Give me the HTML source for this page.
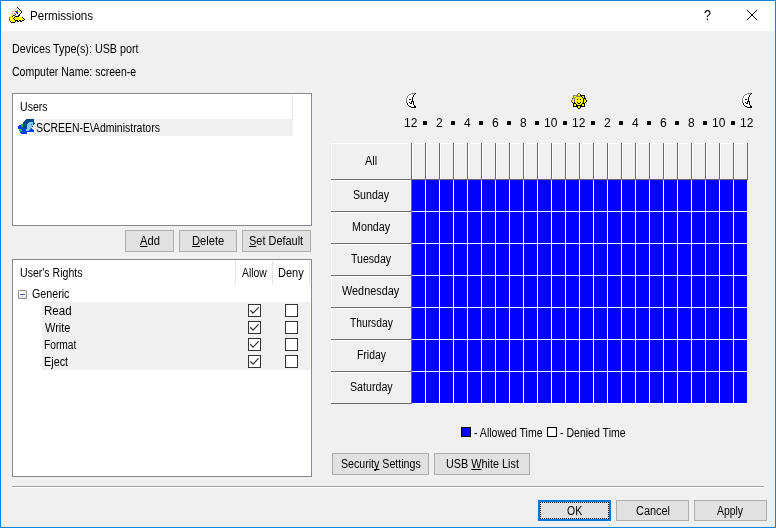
<!DOCTYPE html>
<html><head><meta charset="utf-8"><style>
*{margin:0;padding:0;box-sizing:border-box}
html,body{width:776px;height:528px;overflow:hidden;background:#f0f0f0;font-family:"Liberation Sans",sans-serif;font-size:12px;color:#000}
.a{position:absolute}
.t{position:absolute;white-space:nowrap;line-height:14px;transform-origin:0 0}
u{text-decoration:underline;text-decoration-skip-ink:none}
</style></head><body>
<div class="a" style="left:0px;top:0px;width:776px;height:528px;border:1px solid #1883d7;background:#f0f0f0"></div>
<div class="a" style="left:1px;top:1px;width:774px;height:30px;background:#fff"></div>
<svg class="a" style="left:8px;top:6px" width="17" height="17" viewBox="0 0 17 17" shape-rendering="crispEdges"><rect x="9" y="1" width="1" height="1" fill="#000"/><rect x="8" y="2" width="1" height="1" fill="#c0c0c0"/><rect x="9" y="2" width="1" height="1" fill="#fff"/><rect x="10" y="2" width="1" height="1" fill="#000"/><rect x="7" y="3" width="1" height="1" fill="#c0c0c0"/><rect x="8" y="3" width="3" height="1" fill="#fff"/><rect x="11" y="3" width="1" height="1" fill="#000"/><rect x="6" y="4" width="1" height="1" fill="#c0c0c0"/><rect x="7" y="4" width="2" height="1" fill="#fff"/><rect x="9" y="4" width="1" height="1" fill="#00c000"/><rect x="10" y="4" width="2" height="1" fill="#fff"/><rect x="12" y="4" width="1" height="1" fill="#000"/><rect x="4" y="5" width="2" height="1" fill="#c0c0c0"/><rect x="6" y="5" width="1" height="1" fill="#fff"/><rect x="7" y="5" width="2" height="1" fill="#ff0000"/><rect x="9" y="5" width="1" height="1" fill="#00c000"/><rect x="10" y="5" width="2" height="1" fill="#ffff00"/><rect x="12" y="5" width="1" height="1" fill="#fff"/><rect x="13" y="5" width="1" height="1" fill="#000"/><rect x="4" y="6" width="1" height="1" fill="#c0c0c0"/><rect x="5" y="6" width="3" height="1" fill="#fff"/><rect x="8" y="6" width="2" height="1" fill="#0000ff"/><rect x="10" y="6" width="3" height="1" fill="#fff"/><rect x="13" y="6" width="1" height="1" fill="#000"/><rect x="4" y="7" width="1" height="1" fill="#c0c0c0"/><rect x="5" y="7" width="1" height="1" fill="#fff"/><rect x="6" y="7" width="1" height="1" fill="#ff0000"/><rect x="7" y="7" width="2" height="1" fill="#fff"/><rect x="9" y="7" width="1" height="1" fill="#000"/><rect x="10" y="7" width="2" height="1" fill="#fff"/><rect x="12" y="7" width="1" height="1" fill="#000"/><rect x="4" y="8" width="1" height="1" fill="#c0c0c0"/><rect x="5" y="8" width="2" height="1" fill="#fff"/><rect x="7" y="8" width="1" height="1" fill="#0000ff"/><rect x="8" y="8" width="3" height="1" fill="#fff"/><rect x="11" y="8" width="1" height="1" fill="#000"/><rect x="3" y="9" width="2" height="1" fill="#ffff00"/><rect x="5" y="9" width="2" height="1" fill="#000"/><rect x="7" y="9" width="3" height="1" fill="#fff"/><rect x="10" y="9" width="2" height="1" fill="#000"/><rect x="2" y="10" width="2" height="1" fill="#ffff00"/><rect x="4" y="10" width="1" height="1" fill="#000"/><rect x="5" y="10" width="1" height="1" fill="#fff"/><rect x="6" y="10" width="1" height="1" fill="#ffff00"/><rect x="7" y="10" width="4" height="1" fill="#000"/><rect x="1" y="11" width="1" height="1" fill="#808000"/><rect x="2" y="11" width="3" height="1" fill="#ffff00"/><rect x="5" y="11" width="1" height="1" fill="#fff"/><rect x="6" y="11" width="1" height="1" fill="#000"/><rect x="7" y="11" width="7" height="1" fill="#ffff00"/><rect x="14" y="11" width="1" height="1" fill="#000"/><rect x="1" y="12" width="1" height="1" fill="#808000"/><rect x="2" y="12" width="3" height="1" fill="#ffff00"/><rect x="5" y="12" width="1" height="1" fill="#000"/><rect x="6" y="12" width="9" height="1" fill="#ffff00"/><rect x="15" y="12" width="1" height="1" fill="#000"/><rect x="1" y="13" width="1" height="1" fill="#808000"/><rect x="2" y="13" width="4" height="1" fill="#ffff00"/><rect x="6" y="13" width="1" height="1" fill="#000"/><rect x="7" y="13" width="9" height="1" fill="#ffff00"/><rect x="16" y="13" width="1" height="1" fill="#000"/><rect x="1" y="14" width="1" height="1" fill="#808000"/><rect x="2" y="14" width="5" height="1" fill="#ffff00"/><rect x="7" y="14" width="3" height="1" fill="#000"/><rect x="10" y="14" width="1" height="1" fill="#fff"/><rect x="11" y="14" width="2" height="1" fill="#000"/><rect x="13" y="14" width="1" height="1" fill="#fff"/><rect x="14" y="14" width="2" height="1" fill="#000"/><rect x="2" y="15" width="1" height="1" fill="#000"/><rect x="3" y="15" width="4" height="1" fill="#ffff00"/><rect x="7" y="15" width="1" height="1" fill="#000"/><rect x="9" y="15" width="2" height="1" fill="#000"/><rect x="12" y="15" width="2" height="1" fill="#000"/><rect x="3" y="16" width="4" height="1" fill="#000"/></svg>
<svg class="a" style="left:746px;top:9px" width="12" height="12" viewBox="0 0 12 12"><path d="M1 1L11 11M11 1L1 11" stroke="#000" stroke-width="1"/></svg>
<div class="a" style="left:12px;top:93px;width:300px;height:133px;border:1px solid #828790;background:#fff"></div>
<div class="a" style="left:292px;top:95px;width:1px;height:24px;background:#e5e5e5"></div>
<div class="a" style="left:34px;top:119px;width:259px;height:17px;background:#f0f0f0"></div>
<svg class="a" style="left:16px;top:116px" width="20" height="18" viewBox="0 0 20 18" shape-rendering="crispEdges"><rect x="10" y="3" width="8" height="1" fill="#004a8c"/><rect x="9" y="4" width="9" height="1" fill="#004a8c"/><rect x="8" y="5" width="10" height="1" fill="#004a8c"/><rect x="7" y="6" width="6" height="1" fill="#004a8c"/><rect x="13" y="6" width="4" height="1" fill="#8cc6f4"/><rect x="17" y="6" width="1" height="1" fill="#004a8c"/><rect x="7" y="7" width="5" height="1" fill="#004a8c"/><rect x="12" y="7" width="5" height="1" fill="#8cc6f4"/><rect x="17" y="7" width="2" height="1" fill="#004a8c"/><rect x="5" y="8" width="2" height="1" fill="#10c060"/><rect x="7" y="8" width="4" height="1" fill="#004a8c"/><rect x="11" y="8" width="4" height="1" fill="#8cc6f4"/><rect x="15" y="8" width="1" height="1" fill="#1060ff"/><rect x="16" y="8" width="1" height="1" fill="#8cc6f4"/><rect x="17" y="8" width="1" height="1" fill="#004a8c"/><rect x="3" y="9" width="2" height="1" fill="#0a3cf0"/><rect x="5" y="9" width="2" height="1" fill="#10c060"/><rect x="7" y="9" width="4" height="1" fill="#004a8c"/><rect x="11" y="9" width="6" height="1" fill="#8cc6f4"/><rect x="2" y="10" width="4" height="1" fill="#0a3cf0"/><rect x="6" y="10" width="1" height="1" fill="#10c060"/><rect x="7" y="10" width="4" height="1" fill="#004a8c"/><rect x="11" y="10" width="5" height="1" fill="#8cc6f4"/><rect x="16" y="10" width="1" height="1" fill="#004a8c"/><rect x="2" y="11" width="6" height="1" fill="#0a3cf0"/><rect x="8" y="11" width="3" height="1" fill="#004a8c"/><rect x="11" y="11" width="5" height="1" fill="#8cc6f4"/><rect x="2" y="12" width="7" height="1" fill="#0a3cf0"/><rect x="9" y="12" width="2" height="1" fill="#004a8c"/><rect x="11" y="12" width="4" height="1" fill="#8cc6f4"/><rect x="15" y="12" width="1" height="1" fill="#004a8c"/><rect x="3" y="13" width="3" height="1" fill="#10c060"/><rect x="6" y="13" width="4" height="1" fill="#0a3cf0"/><rect x="10" y="13" width="4" height="1" fill="#8cc6f4"/><rect x="14" y="13" width="3" height="1" fill="#0a3cf0"/><rect x="3" y="14" width="3" height="1" fill="#10c060"/><rect x="6" y="14" width="4" height="1" fill="#0a3cf0"/><rect x="10" y="14" width="3" height="1" fill="#8cc6f4"/><rect x="13" y="14" width="5" height="1" fill="#0a3cf0"/><rect x="4" y="15" width="1" height="1" fill="#10c060"/><rect x="5" y="15" width="13" height="1" fill="#0a3cf0"/><rect x="4" y="16" width="7" height="1" fill="#0a3cf0"/><rect x="5" y="17" width="6" height="1" fill="#0a3cf0"/></svg>
<div class="a" style="left:125px;top:230px;width:49px;height:22px;border:1px solid #adadad;background:#e1e1e1;"></div>
<div class="a" style="left:179px;top:230px;width:58px;height:22px;border:1px solid #adadad;background:#e1e1e1;"></div>
<div class="a" style="left:242px;top:230px;width:69px;height:22px;border:1px solid #adadad;background:#e1e1e1;"></div>
<div class="a" style="left:12px;top:259px;width:300px;height:218px;border:1px solid #828790;background:#fff"></div>
<div class="a" style="left:235px;top:261px;width:1px;height:24px;background:#e5e5e5"></div>
<div class="a" style="left:272px;top:261px;width:1px;height:24px;background:#e5e5e5"></div>
<div class="a" style="left:309px;top:261px;width:1px;height:24px;background:#e5e5e5"></div>
<svg class="a" style="left:18px;top:290px" width="9" height="9" viewBox="0 0 9 9" shape-rendering="crispEdges"><rect x="0" y="0" width="9" height="9" fill="#8e8e8e"/><rect x="0" y="0" width="1" height="1" fill="#c8c8c8"/><rect x="8" y="0" width="1" height="1" fill="#c8c8c8"/><rect x="0" y="8" width="1" height="1" fill="#c8c8c8"/><rect x="8" y="8" width="1" height="1" fill="#c8c8c8"/><rect x="1" y="1" width="7" height="4" fill="#fdfdfd"/><rect x="1" y="5" width="7" height="1" fill="#f4f4f4"/><rect x="1" y="6" width="7" height="2" fill="#e6e6e6"/><rect x="2" y="4" width="5" height="1" fill="#3c56b0"/></svg>
<div class="a" style="left:42px;top:302px;width:268px;height:68px;background:#f0f0f0"></div>
<svg class="a" style="left:248px;top:304px" width="13" height="13" viewBox="0 0 13 13" shape-rendering="crispEdges"><rect x="0.5" y="0.5" width="12" height="12" fill="#fff" stroke="#333"/><path d="M2.3 6.3L5 9.1L10.6 3.4" fill="none" stroke="#333" stroke-width="1.25" shape-rendering="geometricPrecision"/></svg>
<svg class="a" style="left:285px;top:304px" width="13" height="13" viewBox="0 0 13 13" shape-rendering="crispEdges"><rect x="0.5" y="0.5" width="12" height="12" fill="#fff" stroke="#333"/></svg>
<svg class="a" style="left:248px;top:321px" width="13" height="13" viewBox="0 0 13 13" shape-rendering="crispEdges"><rect x="0.5" y="0.5" width="12" height="12" fill="#fff" stroke="#333"/><path d="M2.3 6.3L5 9.1L10.6 3.4" fill="none" stroke="#333" stroke-width="1.25" shape-rendering="geometricPrecision"/></svg>
<svg class="a" style="left:285px;top:321px" width="13" height="13" viewBox="0 0 13 13" shape-rendering="crispEdges"><rect x="0.5" y="0.5" width="12" height="12" fill="#fff" stroke="#333"/></svg>
<svg class="a" style="left:248px;top:338px" width="13" height="13" viewBox="0 0 13 13" shape-rendering="crispEdges"><rect x="0.5" y="0.5" width="12" height="12" fill="#fff" stroke="#333"/><path d="M2.3 6.3L5 9.1L10.6 3.4" fill="none" stroke="#333" stroke-width="1.25" shape-rendering="geometricPrecision"/></svg>
<svg class="a" style="left:285px;top:338px" width="13" height="13" viewBox="0 0 13 13" shape-rendering="crispEdges"><rect x="0.5" y="0.5" width="12" height="12" fill="#fff" stroke="#333"/></svg>
<svg class="a" style="left:248px;top:355px" width="13" height="13" viewBox="0 0 13 13" shape-rendering="crispEdges"><rect x="0.5" y="0.5" width="12" height="12" fill="#fff" stroke="#333"/><path d="M2.3 6.3L5 9.1L10.6 3.4" fill="none" stroke="#333" stroke-width="1.25" shape-rendering="geometricPrecision"/></svg>
<svg class="a" style="left:285px;top:355px" width="13" height="13" viewBox="0 0 13 13" shape-rendering="crispEdges"><rect x="0.5" y="0.5" width="12" height="12" fill="#fff" stroke="#333"/></svg>
<div class="a" style="left:331px;top:143px;width:81px;height:37px;box-shadow:inset -1px -1px #696969,inset 1px 1px #fff"></div>
<div class="a" style="left:331px;top:180px;width:81px;height:32px;box-shadow:inset -1px -1px #696969,inset 1px 1px #fff"></div>
<div class="a" style="left:331px;top:212px;width:81px;height:32px;box-shadow:inset -1px -1px #696969,inset 1px 1px #fff"></div>
<div class="a" style="left:331px;top:244px;width:81px;height:32px;box-shadow:inset -1px -1px #696969,inset 1px 1px #fff"></div>
<div class="a" style="left:331px;top:276px;width:81px;height:32px;box-shadow:inset -1px -1px #696969,inset 1px 1px #fff"></div>
<div class="a" style="left:331px;top:308px;width:81px;height:32px;box-shadow:inset -1px -1px #696969,inset 1px 1px #fff"></div>
<div class="a" style="left:331px;top:340px;width:81px;height:32px;box-shadow:inset -1px -1px #696969,inset 1px 1px #fff"></div>
<div class="a" style="left:331px;top:372px;width:81px;height:32px;box-shadow:inset -1px -1px #696969,inset 1px 1px #fff"></div>
<div class="a" style="left:412px;top:143px;width:14px;height:37px;box-shadow:inset -1px -1px #696969,inset 1px 1px #fff"></div>
<div class="a" style="left:426px;top:143px;width:14px;height:37px;box-shadow:inset -1px -1px #696969,inset 1px 1px #fff"></div>
<div class="a" style="left:440px;top:143px;width:14px;height:37px;box-shadow:inset -1px -1px #696969,inset 1px 1px #fff"></div>
<div class="a" style="left:454px;top:143px;width:14px;height:37px;box-shadow:inset -1px -1px #696969,inset 1px 1px #fff"></div>
<div class="a" style="left:468px;top:143px;width:14px;height:37px;box-shadow:inset -1px -1px #696969,inset 1px 1px #fff"></div>
<div class="a" style="left:482px;top:143px;width:14px;height:37px;box-shadow:inset -1px -1px #696969,inset 1px 1px #fff"></div>
<div class="a" style="left:496px;top:143px;width:14px;height:37px;box-shadow:inset -1px -1px #696969,inset 1px 1px #fff"></div>
<div class="a" style="left:510px;top:143px;width:14px;height:37px;box-shadow:inset -1px -1px #696969,inset 1px 1px #fff"></div>
<div class="a" style="left:524px;top:143px;width:14px;height:37px;box-shadow:inset -1px -1px #696969,inset 1px 1px #fff"></div>
<div class="a" style="left:538px;top:143px;width:14px;height:37px;box-shadow:inset -1px -1px #696969,inset 1px 1px #fff"></div>
<div class="a" style="left:552px;top:143px;width:14px;height:37px;box-shadow:inset -1px -1px #696969,inset 1px 1px #fff"></div>
<div class="a" style="left:566px;top:143px;width:14px;height:37px;box-shadow:inset -1px -1px #696969,inset 1px 1px #fff"></div>
<div class="a" style="left:580px;top:143px;width:14px;height:37px;box-shadow:inset -1px -1px #696969,inset 1px 1px #fff"></div>
<div class="a" style="left:594px;top:143px;width:14px;height:37px;box-shadow:inset -1px -1px #696969,inset 1px 1px #fff"></div>
<div class="a" style="left:608px;top:143px;width:14px;height:37px;box-shadow:inset -1px -1px #696969,inset 1px 1px #fff"></div>
<div class="a" style="left:622px;top:143px;width:14px;height:37px;box-shadow:inset -1px -1px #696969,inset 1px 1px #fff"></div>
<div class="a" style="left:636px;top:143px;width:14px;height:37px;box-shadow:inset -1px -1px #696969,inset 1px 1px #fff"></div>
<div class="a" style="left:650px;top:143px;width:14px;height:37px;box-shadow:inset -1px -1px #696969,inset 1px 1px #fff"></div>
<div class="a" style="left:664px;top:143px;width:14px;height:37px;box-shadow:inset -1px -1px #696969,inset 1px 1px #fff"></div>
<div class="a" style="left:678px;top:143px;width:14px;height:37px;box-shadow:inset -1px -1px #696969,inset 1px 1px #fff"></div>
<div class="a" style="left:692px;top:143px;width:14px;height:37px;box-shadow:inset -1px -1px #696969,inset 1px 1px #fff"></div>
<div class="a" style="left:706px;top:143px;width:14px;height:37px;box-shadow:inset -1px -1px #696969,inset 1px 1px #fff"></div>
<div class="a" style="left:720px;top:143px;width:14px;height:37px;box-shadow:inset -1px -1px #696969,inset 1px 1px #fff"></div>
<div class="a" style="left:734px;top:143px;width:14px;height:37px;box-shadow:inset -1px -1px #696969,inset 1px 1px #fff"></div>
<div class="a" style="left:412px;top:180px;width:335px;height:224px;background:#fff"></div>
<div class="a" style="left:412px;top:180px;width:13px;height:31px;background:#00f"></div>
<div class="a" style="left:426px;top:180px;width:13px;height:31px;background:#00f"></div>
<div class="a" style="left:440px;top:180px;width:13px;height:31px;background:#00f"></div>
<div class="a" style="left:454px;top:180px;width:13px;height:31px;background:#00f"></div>
<div class="a" style="left:468px;top:180px;width:13px;height:31px;background:#00f"></div>
<div class="a" style="left:482px;top:180px;width:13px;height:31px;background:#00f"></div>
<div class="a" style="left:496px;top:180px;width:13px;height:31px;background:#00f"></div>
<div class="a" style="left:510px;top:180px;width:13px;height:31px;background:#00f"></div>
<div class="a" style="left:524px;top:180px;width:13px;height:31px;background:#00f"></div>
<div class="a" style="left:538px;top:180px;width:13px;height:31px;background:#00f"></div>
<div class="a" style="left:552px;top:180px;width:13px;height:31px;background:#00f"></div>
<div class="a" style="left:566px;top:180px;width:13px;height:31px;background:#00f"></div>
<div class="a" style="left:580px;top:180px;width:13px;height:31px;background:#00f"></div>
<div class="a" style="left:594px;top:180px;width:13px;height:31px;background:#00f"></div>
<div class="a" style="left:608px;top:180px;width:13px;height:31px;background:#00f"></div>
<div class="a" style="left:622px;top:180px;width:13px;height:31px;background:#00f"></div>
<div class="a" style="left:636px;top:180px;width:13px;height:31px;background:#00f"></div>
<div class="a" style="left:650px;top:180px;width:13px;height:31px;background:#00f"></div>
<div class="a" style="left:664px;top:180px;width:13px;height:31px;background:#00f"></div>
<div class="a" style="left:678px;top:180px;width:13px;height:31px;background:#00f"></div>
<div class="a" style="left:692px;top:180px;width:13px;height:31px;background:#00f"></div>
<div class="a" style="left:706px;top:180px;width:13px;height:31px;background:#00f"></div>
<div class="a" style="left:720px;top:180px;width:13px;height:31px;background:#00f"></div>
<div class="a" style="left:734px;top:180px;width:13px;height:31px;background:#00f"></div>
<div class="a" style="left:412px;top:212px;width:13px;height:31px;background:#00f"></div>
<div class="a" style="left:426px;top:212px;width:13px;height:31px;background:#00f"></div>
<div class="a" style="left:440px;top:212px;width:13px;height:31px;background:#00f"></div>
<div class="a" style="left:454px;top:212px;width:13px;height:31px;background:#00f"></div>
<div class="a" style="left:468px;top:212px;width:13px;height:31px;background:#00f"></div>
<div class="a" style="left:482px;top:212px;width:13px;height:31px;background:#00f"></div>
<div class="a" style="left:496px;top:212px;width:13px;height:31px;background:#00f"></div>
<div class="a" style="left:510px;top:212px;width:13px;height:31px;background:#00f"></div>
<div class="a" style="left:524px;top:212px;width:13px;height:31px;background:#00f"></div>
<div class="a" style="left:538px;top:212px;width:13px;height:31px;background:#00f"></div>
<div class="a" style="left:552px;top:212px;width:13px;height:31px;background:#00f"></div>
<div class="a" style="left:566px;top:212px;width:13px;height:31px;background:#00f"></div>
<div class="a" style="left:580px;top:212px;width:13px;height:31px;background:#00f"></div>
<div class="a" style="left:594px;top:212px;width:13px;height:31px;background:#00f"></div>
<div class="a" style="left:608px;top:212px;width:13px;height:31px;background:#00f"></div>
<div class="a" style="left:622px;top:212px;width:13px;height:31px;background:#00f"></div>
<div class="a" style="left:636px;top:212px;width:13px;height:31px;background:#00f"></div>
<div class="a" style="left:650px;top:212px;width:13px;height:31px;background:#00f"></div>
<div class="a" style="left:664px;top:212px;width:13px;height:31px;background:#00f"></div>
<div class="a" style="left:678px;top:212px;width:13px;height:31px;background:#00f"></div>
<div class="a" style="left:692px;top:212px;width:13px;height:31px;background:#00f"></div>
<div class="a" style="left:706px;top:212px;width:13px;height:31px;background:#00f"></div>
<div class="a" style="left:720px;top:212px;width:13px;height:31px;background:#00f"></div>
<div class="a" style="left:734px;top:212px;width:13px;height:31px;background:#00f"></div>
<div class="a" style="left:412px;top:244px;width:13px;height:31px;background:#00f"></div>
<div class="a" style="left:426px;top:244px;width:13px;height:31px;background:#00f"></div>
<div class="a" style="left:440px;top:244px;width:13px;height:31px;background:#00f"></div>
<div class="a" style="left:454px;top:244px;width:13px;height:31px;background:#00f"></div>
<div class="a" style="left:468px;top:244px;width:13px;height:31px;background:#00f"></div>
<div class="a" style="left:482px;top:244px;width:13px;height:31px;background:#00f"></div>
<div class="a" style="left:496px;top:244px;width:13px;height:31px;background:#00f"></div>
<div class="a" style="left:510px;top:244px;width:13px;height:31px;background:#00f"></div>
<div class="a" style="left:524px;top:244px;width:13px;height:31px;background:#00f"></div>
<div class="a" style="left:538px;top:244px;width:13px;height:31px;background:#00f"></div>
<div class="a" style="left:552px;top:244px;width:13px;height:31px;background:#00f"></div>
<div class="a" style="left:566px;top:244px;width:13px;height:31px;background:#00f"></div>
<div class="a" style="left:580px;top:244px;width:13px;height:31px;background:#00f"></div>
<div class="a" style="left:594px;top:244px;width:13px;height:31px;background:#00f"></div>
<div class="a" style="left:608px;top:244px;width:13px;height:31px;background:#00f"></div>
<div class="a" style="left:622px;top:244px;width:13px;height:31px;background:#00f"></div>
<div class="a" style="left:636px;top:244px;width:13px;height:31px;background:#00f"></div>
<div class="a" style="left:650px;top:244px;width:13px;height:31px;background:#00f"></div>
<div class="a" style="left:664px;top:244px;width:13px;height:31px;background:#00f"></div>
<div class="a" style="left:678px;top:244px;width:13px;height:31px;background:#00f"></div>
<div class="a" style="left:692px;top:244px;width:13px;height:31px;background:#00f"></div>
<div class="a" style="left:706px;top:244px;width:13px;height:31px;background:#00f"></div>
<div class="a" style="left:720px;top:244px;width:13px;height:31px;background:#00f"></div>
<div class="a" style="left:734px;top:244px;width:13px;height:31px;background:#00f"></div>
<div class="a" style="left:412px;top:276px;width:13px;height:31px;background:#00f"></div>
<div class="a" style="left:426px;top:276px;width:13px;height:31px;background:#00f"></div>
<div class="a" style="left:440px;top:276px;width:13px;height:31px;background:#00f"></div>
<div class="a" style="left:454px;top:276px;width:13px;height:31px;background:#00f"></div>
<div class="a" style="left:468px;top:276px;width:13px;height:31px;background:#00f"></div>
<div class="a" style="left:482px;top:276px;width:13px;height:31px;background:#00f"></div>
<div class="a" style="left:496px;top:276px;width:13px;height:31px;background:#00f"></div>
<div class="a" style="left:510px;top:276px;width:13px;height:31px;background:#00f"></div>
<div class="a" style="left:524px;top:276px;width:13px;height:31px;background:#00f"></div>
<div class="a" style="left:538px;top:276px;width:13px;height:31px;background:#00f"></div>
<div class="a" style="left:552px;top:276px;width:13px;height:31px;background:#00f"></div>
<div class="a" style="left:566px;top:276px;width:13px;height:31px;background:#00f"></div>
<div class="a" style="left:580px;top:276px;width:13px;height:31px;background:#00f"></div>
<div class="a" style="left:594px;top:276px;width:13px;height:31px;background:#00f"></div>
<div class="a" style="left:608px;top:276px;width:13px;height:31px;background:#00f"></div>
<div class="a" style="left:622px;top:276px;width:13px;height:31px;background:#00f"></div>
<div class="a" style="left:636px;top:276px;width:13px;height:31px;background:#00f"></div>
<div class="a" style="left:650px;top:276px;width:13px;height:31px;background:#00f"></div>
<div class="a" style="left:664px;top:276px;width:13px;height:31px;background:#00f"></div>
<div class="a" style="left:678px;top:276px;width:13px;height:31px;background:#00f"></div>
<div class="a" style="left:692px;top:276px;width:13px;height:31px;background:#00f"></div>
<div class="a" style="left:706px;top:276px;width:13px;height:31px;background:#00f"></div>
<div class="a" style="left:720px;top:276px;width:13px;height:31px;background:#00f"></div>
<div class="a" style="left:734px;top:276px;width:13px;height:31px;background:#00f"></div>
<div class="a" style="left:412px;top:308px;width:13px;height:31px;background:#00f"></div>
<div class="a" style="left:426px;top:308px;width:13px;height:31px;background:#00f"></div>
<div class="a" style="left:440px;top:308px;width:13px;height:31px;background:#00f"></div>
<div class="a" style="left:454px;top:308px;width:13px;height:31px;background:#00f"></div>
<div class="a" style="left:468px;top:308px;width:13px;height:31px;background:#00f"></div>
<div class="a" style="left:482px;top:308px;width:13px;height:31px;background:#00f"></div>
<div class="a" style="left:496px;top:308px;width:13px;height:31px;background:#00f"></div>
<div class="a" style="left:510px;top:308px;width:13px;height:31px;background:#00f"></div>
<div class="a" style="left:524px;top:308px;width:13px;height:31px;background:#00f"></div>
<div class="a" style="left:538px;top:308px;width:13px;height:31px;background:#00f"></div>
<div class="a" style="left:552px;top:308px;width:13px;height:31px;background:#00f"></div>
<div class="a" style="left:566px;top:308px;width:13px;height:31px;background:#00f"></div>
<div class="a" style="left:580px;top:308px;width:13px;height:31px;background:#00f"></div>
<div class="a" style="left:594px;top:308px;width:13px;height:31px;background:#00f"></div>
<div class="a" style="left:608px;top:308px;width:13px;height:31px;background:#00f"></div>
<div class="a" style="left:622px;top:308px;width:13px;height:31px;background:#00f"></div>
<div class="a" style="left:636px;top:308px;width:13px;height:31px;background:#00f"></div>
<div class="a" style="left:650px;top:308px;width:13px;height:31px;background:#00f"></div>
<div class="a" style="left:664px;top:308px;width:13px;height:31px;background:#00f"></div>
<div class="a" style="left:678px;top:308px;width:13px;height:31px;background:#00f"></div>
<div class="a" style="left:692px;top:308px;width:13px;height:31px;background:#00f"></div>
<div class="a" style="left:706px;top:308px;width:13px;height:31px;background:#00f"></div>
<div class="a" style="left:720px;top:308px;width:13px;height:31px;background:#00f"></div>
<div class="a" style="left:734px;top:308px;width:13px;height:31px;background:#00f"></div>
<div class="a" style="left:412px;top:340px;width:13px;height:31px;background:#00f"></div>
<div class="a" style="left:426px;top:340px;width:13px;height:31px;background:#00f"></div>
<div class="a" style="left:440px;top:340px;width:13px;height:31px;background:#00f"></div>
<div class="a" style="left:454px;top:340px;width:13px;height:31px;background:#00f"></div>
<div class="a" style="left:468px;top:340px;width:13px;height:31px;background:#00f"></div>
<div class="a" style="left:482px;top:340px;width:13px;height:31px;background:#00f"></div>
<div class="a" style="left:496px;top:340px;width:13px;height:31px;background:#00f"></div>
<div class="a" style="left:510px;top:340px;width:13px;height:31px;background:#00f"></div>
<div class="a" style="left:524px;top:340px;width:13px;height:31px;background:#00f"></div>
<div class="a" style="left:538px;top:340px;width:13px;height:31px;background:#00f"></div>
<div class="a" style="left:552px;top:340px;width:13px;height:31px;background:#00f"></div>
<div class="a" style="left:566px;top:340px;width:13px;height:31px;background:#00f"></div>
<div class="a" style="left:580px;top:340px;width:13px;height:31px;background:#00f"></div>
<div class="a" style="left:594px;top:340px;width:13px;height:31px;background:#00f"></div>
<div class="a" style="left:608px;top:340px;width:13px;height:31px;background:#00f"></div>
<div class="a" style="left:622px;top:340px;width:13px;height:31px;background:#00f"></div>
<div class="a" style="left:636px;top:340px;width:13px;height:31px;background:#00f"></div>
<div class="a" style="left:650px;top:340px;width:13px;height:31px;background:#00f"></div>
<div class="a" style="left:664px;top:340px;width:13px;height:31px;background:#00f"></div>
<div class="a" style="left:678px;top:340px;width:13px;height:31px;background:#00f"></div>
<div class="a" style="left:692px;top:340px;width:13px;height:31px;background:#00f"></div>
<div class="a" style="left:706px;top:340px;width:13px;height:31px;background:#00f"></div>
<div class="a" style="left:720px;top:340px;width:13px;height:31px;background:#00f"></div>
<div class="a" style="left:734px;top:340px;width:13px;height:31px;background:#00f"></div>
<div class="a" style="left:412px;top:372px;width:13px;height:31px;background:#00f"></div>
<div class="a" style="left:426px;top:372px;width:13px;height:31px;background:#00f"></div>
<div class="a" style="left:440px;top:372px;width:13px;height:31px;background:#00f"></div>
<div class="a" style="left:454px;top:372px;width:13px;height:31px;background:#00f"></div>
<div class="a" style="left:468px;top:372px;width:13px;height:31px;background:#00f"></div>
<div class="a" style="left:482px;top:372px;width:13px;height:31px;background:#00f"></div>
<div class="a" style="left:496px;top:372px;width:13px;height:31px;background:#00f"></div>
<div class="a" style="left:510px;top:372px;width:13px;height:31px;background:#00f"></div>
<div class="a" style="left:524px;top:372px;width:13px;height:31px;background:#00f"></div>
<div class="a" style="left:538px;top:372px;width:13px;height:31px;background:#00f"></div>
<div class="a" style="left:552px;top:372px;width:13px;height:31px;background:#00f"></div>
<div class="a" style="left:566px;top:372px;width:13px;height:31px;background:#00f"></div>
<div class="a" style="left:580px;top:372px;width:13px;height:31px;background:#00f"></div>
<div class="a" style="left:594px;top:372px;width:13px;height:31px;background:#00f"></div>
<div class="a" style="left:608px;top:372px;width:13px;height:31px;background:#00f"></div>
<div class="a" style="left:622px;top:372px;width:13px;height:31px;background:#00f"></div>
<div class="a" style="left:636px;top:372px;width:13px;height:31px;background:#00f"></div>
<div class="a" style="left:650px;top:372px;width:13px;height:31px;background:#00f"></div>
<div class="a" style="left:664px;top:372px;width:13px;height:31px;background:#00f"></div>
<div class="a" style="left:678px;top:372px;width:13px;height:31px;background:#00f"></div>
<div class="a" style="left:692px;top:372px;width:13px;height:31px;background:#00f"></div>
<div class="a" style="left:706px;top:372px;width:13px;height:31px;background:#00f"></div>
<div class="a" style="left:720px;top:372px;width:13px;height:31px;background:#00f"></div>
<div class="a" style="left:734px;top:372px;width:13px;height:31px;background:#00f"></div>
<div class="a" style="left:423px;top:121px;width:4px;height:4px;background:#000"></div>
<div class="a" style="left:451px;top:121px;width:4px;height:4px;background:#000"></div>
<div class="a" style="left:479px;top:121px;width:4px;height:4px;background:#000"></div>
<div class="a" style="left:507px;top:121px;width:4px;height:4px;background:#000"></div>
<div class="a" style="left:535px;top:121px;width:4px;height:4px;background:#000"></div>
<div class="a" style="left:563px;top:121px;width:4px;height:4px;background:#000"></div>
<div class="a" style="left:591px;top:121px;width:4px;height:4px;background:#000"></div>
<div class="a" style="left:619px;top:121px;width:4px;height:4px;background:#000"></div>
<div class="a" style="left:647px;top:121px;width:4px;height:4px;background:#000"></div>
<div class="a" style="left:675px;top:121px;width:4px;height:4px;background:#000"></div>
<div class="a" style="left:703px;top:121px;width:4px;height:4px;background:#000"></div>
<div class="a" style="left:731px;top:121px;width:4px;height:4px;background:#000"></div>
<svg class="a" style="left:402px;top:90px" width="18" height="18" viewBox="0 0 18 18" shape-rendering="crispEdges"><rect x="9" y="3" width="4" height="1" fill="#808080"/><rect x="13" y="3" width="1" height="1" fill="#000"/><rect x="7" y="4" width="2" height="1" fill="#808080"/><rect x="9" y="4" width="3" height="1" fill="#fff"/><rect x="12" y="4" width="1" height="1" fill="#000"/><rect x="6" y="5" width="1" height="1" fill="#808080"/><rect x="7" y="5" width="4" height="1" fill="#fff"/><rect x="11" y="5" width="1" height="1" fill="#000"/><rect x="5" y="6" width="1" height="1" fill="#808080"/><rect x="6" y="6" width="5" height="1" fill="#fff"/><rect x="11" y="6" width="1" height="1" fill="#000"/><rect x="5" y="7" width="1" height="1" fill="#808080"/><rect x="6" y="7" width="4" height="1" fill="#fff"/><rect x="10" y="7" width="1" height="1" fill="#000"/><rect x="4" y="8" width="1" height="1" fill="#808080"/><rect x="5" y="8" width="5" height="1" fill="#fff"/><rect x="10" y="8" width="1" height="1" fill="#000"/><rect x="4" y="9" width="1" height="1" fill="#808080"/><rect x="5" y="9" width="2" height="1" fill="#fff"/><rect x="7" y="9" width="2" height="1" fill="#000"/><rect x="9" y="9" width="1" height="1" fill="#fff"/><rect x="10" y="9" width="1" height="1" fill="#000"/><rect x="4" y="10" width="1" height="1" fill="#808080"/><rect x="5" y="10" width="5" height="1" fill="#fff"/><rect x="10" y="10" width="1" height="1" fill="#000"/><rect x="4" y="11" width="1" height="1" fill="#808080"/><rect x="5" y="11" width="4" height="1" fill="#fff"/><rect x="9" y="11" width="3" height="1" fill="#000"/><rect x="4" y="12" width="1" height="1" fill="#808080"/><rect x="5" y="12" width="2" height="1" fill="#fff"/><rect x="7" y="12" width="1" height="1" fill="#000"/><rect x="8" y="12" width="1" height="1" fill="#fff"/><rect x="9" y="12" width="1" height="1" fill="#000"/><rect x="10" y="12" width="1" height="1" fill="#fff"/><rect x="11" y="12" width="1" height="1" fill="#000"/><rect x="5" y="13" width="1" height="1" fill="#000"/><rect x="6" y="13" width="2" height="1" fill="#fff"/><rect x="8" y="13" width="2" height="1" fill="#000"/><rect x="10" y="13" width="1" height="1" fill="#fff"/><rect x="11" y="13" width="1" height="1" fill="#000"/><rect x="5" y="14" width="1" height="1" fill="#000"/><rect x="6" y="14" width="5" height="1" fill="#fff"/><rect x="11" y="14" width="1" height="1" fill="#000"/><rect x="6" y="15" width="1" height="1" fill="#000"/><rect x="7" y="15" width="5" height="1" fill="#fff"/><rect x="12" y="15" width="1" height="1" fill="#000"/><rect x="7" y="16" width="2" height="1" fill="#000"/><rect x="9" y="16" width="3" height="1" fill="#fff"/><rect x="12" y="16" width="2" height="1" fill="#000"/><rect x="9" y="17" width="5" height="1" fill="#000"/></svg>
<svg class="a" style="left:738px;top:90px" width="18" height="18" viewBox="0 0 18 18" shape-rendering="crispEdges"><rect x="9" y="3" width="4" height="1" fill="#808080"/><rect x="13" y="3" width="1" height="1" fill="#000"/><rect x="7" y="4" width="2" height="1" fill="#808080"/><rect x="9" y="4" width="3" height="1" fill="#fff"/><rect x="12" y="4" width="1" height="1" fill="#000"/><rect x="6" y="5" width="1" height="1" fill="#808080"/><rect x="7" y="5" width="4" height="1" fill="#fff"/><rect x="11" y="5" width="1" height="1" fill="#000"/><rect x="5" y="6" width="1" height="1" fill="#808080"/><rect x="6" y="6" width="5" height="1" fill="#fff"/><rect x="11" y="6" width="1" height="1" fill="#000"/><rect x="5" y="7" width="1" height="1" fill="#808080"/><rect x="6" y="7" width="4" height="1" fill="#fff"/><rect x="10" y="7" width="1" height="1" fill="#000"/><rect x="4" y="8" width="1" height="1" fill="#808080"/><rect x="5" y="8" width="5" height="1" fill="#fff"/><rect x="10" y="8" width="1" height="1" fill="#000"/><rect x="4" y="9" width="1" height="1" fill="#808080"/><rect x="5" y="9" width="2" height="1" fill="#fff"/><rect x="7" y="9" width="2" height="1" fill="#000"/><rect x="9" y="9" width="1" height="1" fill="#fff"/><rect x="10" y="9" width="1" height="1" fill="#000"/><rect x="4" y="10" width="1" height="1" fill="#808080"/><rect x="5" y="10" width="5" height="1" fill="#fff"/><rect x="10" y="10" width="1" height="1" fill="#000"/><rect x="4" y="11" width="1" height="1" fill="#808080"/><rect x="5" y="11" width="4" height="1" fill="#fff"/><rect x="9" y="11" width="3" height="1" fill="#000"/><rect x="4" y="12" width="1" height="1" fill="#808080"/><rect x="5" y="12" width="2" height="1" fill="#fff"/><rect x="7" y="12" width="1" height="1" fill="#000"/><rect x="8" y="12" width="1" height="1" fill="#fff"/><rect x="9" y="12" width="1" height="1" fill="#000"/><rect x="10" y="12" width="1" height="1" fill="#fff"/><rect x="11" y="12" width="1" height="1" fill="#000"/><rect x="5" y="13" width="1" height="1" fill="#000"/><rect x="6" y="13" width="2" height="1" fill="#fff"/><rect x="8" y="13" width="2" height="1" fill="#000"/><rect x="10" y="13" width="1" height="1" fill="#fff"/><rect x="11" y="13" width="1" height="1" fill="#000"/><rect x="5" y="14" width="1" height="1" fill="#000"/><rect x="6" y="14" width="5" height="1" fill="#fff"/><rect x="11" y="14" width="1" height="1" fill="#000"/><rect x="6" y="15" width="1" height="1" fill="#000"/><rect x="7" y="15" width="5" height="1" fill="#fff"/><rect x="12" y="15" width="1" height="1" fill="#000"/><rect x="7" y="16" width="2" height="1" fill="#000"/><rect x="9" y="16" width="3" height="1" fill="#fff"/><rect x="12" y="16" width="2" height="1" fill="#000"/><rect x="9" y="17" width="5" height="1" fill="#000"/></svg>
<svg class="a" style="left:570px;top:92px" width="18" height="17" viewBox="0 0 18 17" shape-rendering="crispEdges"><rect x="8" y="1" width="2" height="1" fill="#808080"/><rect x="7" y="2" width="1" height="1" fill="#808080"/><rect x="8" y="2" width="2" height="1" fill="#ffff00"/><rect x="10" y="2" width="1" height="1" fill="#000"/><rect x="3" y="3" width="5" height="1" fill="#808080"/><rect x="8" y="3" width="2" height="1" fill="#ffff00"/><rect x="10" y="3" width="5" height="1" fill="#000"/><rect x="3" y="4" width="1" height="1" fill="#808080"/><rect x="4" y="4" width="2" height="1" fill="#ffff00"/><rect x="6" y="4" width="5" height="1" fill="#808080"/><rect x="11" y="4" width="1" height="1" fill="#000"/><rect x="12" y="4" width="2" height="1" fill="#ffff00"/><rect x="14" y="4" width="1" height="1" fill="#000"/><rect x="3" y="5" width="1" height="1" fill="#808080"/><rect x="4" y="5" width="1" height="1" fill="#ffff00"/><rect x="5" y="5" width="1" height="1" fill="#808080"/><rect x="6" y="5" width="6" height="1" fill="#ffff00"/><rect x="12" y="5" width="1" height="1" fill="#000"/><rect x="13" y="5" width="1" height="1" fill="#ffff00"/><rect x="14" y="5" width="1" height="1" fill="#000"/><rect x="2" y="6" width="3" height="1" fill="#808080"/><rect x="5" y="6" width="8" height="1" fill="#ffff00"/><rect x="13" y="6" width="3" height="1" fill="#000"/><rect x="2" y="7" width="1" height="1" fill="#808080"/><rect x="3" y="7" width="1" height="1" fill="#ffff00"/><rect x="4" y="7" width="1" height="1" fill="#808080"/><rect x="5" y="7" width="2" height="1" fill="#ffff00"/><rect x="7" y="7" width="1" height="1" fill="#000"/><rect x="8" y="7" width="2" height="1" fill="#ffff00"/><rect x="10" y="7" width="1" height="1" fill="#000"/><rect x="11" y="7" width="2" height="1" fill="#ffff00"/><rect x="13" y="7" width="1" height="1" fill="#000"/><rect x="14" y="7" width="1" height="1" fill="#ffff00"/><rect x="15" y="7" width="1" height="1" fill="#000"/><rect x="1" y="8" width="1" height="1" fill="#808080"/><rect x="2" y="8" width="2" height="1" fill="#ffff00"/><rect x="4" y="8" width="1" height="1" fill="#808080"/><rect x="5" y="8" width="8" height="1" fill="#ffff00"/><rect x="13" y="8" width="1" height="1" fill="#000"/><rect x="14" y="8" width="2" height="1" fill="#ffff00"/><rect x="16" y="8" width="1" height="1" fill="#000"/><rect x="1" y="9" width="1" height="1" fill="#808080"/><rect x="2" y="9" width="2" height="1" fill="#ffff00"/><rect x="4" y="9" width="1" height="1" fill="#808080"/><rect x="5" y="9" width="8" height="1" fill="#ffff00"/><rect x="13" y="9" width="1" height="1" fill="#000"/><rect x="14" y="9" width="2" height="1" fill="#ffff00"/><rect x="16" y="9" width="1" height="1" fill="#000"/><rect x="2" y="10" width="1" height="1" fill="#000"/><rect x="3" y="10" width="1" height="1" fill="#ffff00"/><rect x="4" y="10" width="1" height="1" fill="#000"/><rect x="5" y="10" width="2" height="1" fill="#ffff00"/><rect x="7" y="10" width="1" height="1" fill="#000"/><rect x="8" y="10" width="2" height="1" fill="#ffff00"/><rect x="10" y="10" width="1" height="1" fill="#000"/><rect x="11" y="10" width="2" height="1" fill="#ffff00"/><rect x="13" y="10" width="1" height="1" fill="#000"/><rect x="14" y="10" width="1" height="1" fill="#ffff00"/><rect x="15" y="10" width="1" height="1" fill="#000"/><rect x="3" y="11" width="3" height="1" fill="#000"/><rect x="6" y="11" width="2" height="1" fill="#ffff00"/><rect x="8" y="11" width="2" height="1" fill="#000"/><rect x="10" y="11" width="2" height="1" fill="#ffff00"/><rect x="12" y="11" width="3" height="1" fill="#000"/><rect x="3" y="12" width="1" height="1" fill="#000"/><rect x="4" y="12" width="2" height="1" fill="#ffff00"/><rect x="6" y="12" width="1" height="1" fill="#000"/><rect x="7" y="12" width="4" height="1" fill="#ffff00"/><rect x="11" y="12" width="1" height="1" fill="#000"/><rect x="12" y="12" width="2" height="1" fill="#ffff00"/><rect x="14" y="12" width="1" height="1" fill="#000"/><rect x="3" y="13" width="1" height="1" fill="#000"/><rect x="4" y="13" width="2" height="1" fill="#ffff00"/><rect x="6" y="13" width="6" height="1" fill="#000"/><rect x="12" y="13" width="2" height="1" fill="#ffff00"/><rect x="14" y="13" width="1" height="1" fill="#000"/><rect x="3" y="14" width="5" height="1" fill="#000"/><rect x="8" y="14" width="2" height="1" fill="#ffff00"/><rect x="10" y="14" width="5" height="1" fill="#000"/><rect x="7" y="15" width="1" height="1" fill="#000"/><rect x="8" y="15" width="2" height="1" fill="#ffff00"/><rect x="10" y="15" width="1" height="1" fill="#000"/><rect x="8" y="16" width="2" height="1" fill="#000"/></svg>
<div class="a" style="left:461px;top:427px;width:10px;height:10px;border:1px solid #000;background:#00f"></div>
<div class="a" style="left:547px;top:427px;width:10px;height:10px;border:1px solid #000;background:#fff"></div>
<div class="a" style="left:332px;top:453px;width:97px;height:22px;border:1px solid #adadad;background:#e1e1e1;"></div>
<div class="a" style="left:434px;top:453px;width:96px;height:22px;border:1px solid #adadad;background:#e1e1e1;"></div>
<div class="a" style="left:12px;top:486px;width:752px;height:1px;background:#a0a0a0"></div>
<div class="a" style="left:12px;top:487px;width:752px;height:1px;background:#fff"></div>
<div class="a" style="left:538px;top:500px;width:73px;height:21px;border:2px solid #0078d7;background:#e1e1e1"></div>
<div class="a" style="left:540px;top:502px;width:69px;height:17px;border:1px dotted #000"></div>
<div class="a" style="left:616px;top:500px;width:73px;height:21px;border:1px solid #adadad;background:#e1e1e1;"></div>
<div class="a" style="left:694px;top:500px;width:73px;height:21px;border:1px solid #adadad;background:#e1e1e1;"></div>
<div class="a" style="left:0;top:0;width:776px;height:528px;filter:grayscale(1)">
<div class="t" style="left:29.53px;top:9px;font-size:12px;transform:scaleX(0.9656)">Permissions</div>
<div class="t" style="left:703.90px;top:8px;font-size:14px;transform:scaleX(0.9000)">?</div>
<div class="t" style="left:11.60px;top:42px;font-size:12px;transform:scaleX(0.8964)">Devices Type(s): USB port</div>
<div class="t" style="left:11.62px;top:65px;font-size:12px;transform:scaleX(0.8779)">Computer Name: screen-e</div>
<div class="t" style="left:19.72px;top:100px;font-size:12px;transform:scaleX(0.8800)">Users</div>
<div class="t" style="left:36.13px;top:121px;font-size:12px;transform:scaleX(0.8723)">SCREEN-E\Administrators</div>
<div class="t" style="left:140.00px;top:234px;font-size:12px;transform:scaleX(0.9286)"><u>A</u>dd</div>
<div class="t" style="left:191.67px;top:234px;font-size:12px;transform:scaleX(0.9273)"><u>D</u>elete</div>
<div class="t" style="left:249.29px;top:234px;font-size:12px;transform:scaleX(0.9121)"><u>S</u>et Default</div>
<div class="t" style="left:19.62px;top:266px;font-size:12px;transform:scaleX(0.8821)">User's Rights</div>
<div class="t" style="left:242.25px;top:266px;font-size:12px;transform:scaleX(0.8621)">Allow</div>
<div class="t" style="left:278.33px;top:266px;font-size:12px;transform:scaleX(0.9167)">Deny</div>
<div class="t" style="left:31.61px;top:287px;font-size:12px;transform:scaleX(0.8902)">Generic</div>
<div class="t" style="left:43.54px;top:304px;font-size:12px;transform:scaleX(0.9630)">Read</div>
<div class="t" style="left:44.50px;top:321px;font-size:12px;transform:scaleX(0.9167)">Write</div>
<div class="t" style="left:43.65px;top:338px;font-size:12px;transform:scaleX(0.8514)">Format</div>
<div class="t" style="left:43.60px;top:355px;font-size:12px;transform:scaleX(0.9038)">Eject</div>
<div class="t" style="left:364.75px;top:154px;font-size:12px;transform:scaleX(0.9038)">All</div>
<div class="t" style="left:352.61px;top:188px;font-size:12px;transform:scaleX(0.8875)">Sunday</div>
<div class="t" style="left:351.86px;top:220px;font-size:12px;transform:scaleX(0.8929)">Monday</div>
<div class="t" style="left:351.00px;top:252px;font-size:12px;transform:scaleX(0.8804)">Tuesday</div>
<div class="t" style="left:342.25px;top:284px;font-size:12px;transform:scaleX(0.9048)">Wednesday</div>
<div class="t" style="left:350.25px;top:316px;font-size:12px;transform:scaleX(0.8550)">Thursday</div>
<div class="t" style="left:356.88px;top:348px;font-size:12px;transform:scaleX(0.8672)">Friday</div>
<div class="t" style="left:349.61px;top:380px;font-size:12px;transform:scaleX(0.8883)">Saturday</div>
<div class="t" style="left:473.70px;top:426px;font-size:12px;transform:scaleX(0.8782)">- Allowed Time</div>
<div class="t" style="left:559.90px;top:426px;font-size:12px;transform:scaleX(0.8784)">- Denied Time</div>
<div class="t" style="left:340.51px;top:457px;font-size:12px;transform:scaleX(0.8854)">Securit<u>y</u> Settings</div>
<div class="t" style="left:445.50px;top:457px;font-size:12px;transform:scaleX(0.9038)">USB <u>W</u>hite List</div>
<div class="t" style="left:567.40px;top:504px;font-size:12px;transform:scaleX(0.8706)">OK</div>
<div class="t" style="left:635.79px;top:504px;font-size:12px;transform:scaleX(0.9111)">Cancel</div>
<div class="t" style="left:717.00px;top:504px;font-size:12px;transform:scaleX(0.8667)">Apply</div>
<div class="t" style="left:404.00px;top:116px;font-size:12px;transform:scaleX(1.0000)">12</div>
<div class="t" style="left:436.00px;top:116px;font-size:12px;transform:scaleX(1.0000)">2</div>
<div class="t" style="left:464.00px;top:116px;font-size:12px;transform:scaleX(1.0000)">4</div>
<div class="t" style="left:492.00px;top:116px;font-size:12px;transform:scaleX(1.0000)">6</div>
<div class="t" style="left:520.00px;top:116px;font-size:12px;transform:scaleX(1.0000)">8</div>
<div class="t" style="left:544.00px;top:116px;font-size:12px;transform:scaleX(1.0000)">10</div>
<div class="t" style="left:572.00px;top:116px;font-size:12px;transform:scaleX(1.0000)">12</div>
<div class="t" style="left:604.00px;top:116px;font-size:12px;transform:scaleX(1.0000)">2</div>
<div class="t" style="left:632.00px;top:116px;font-size:12px;transform:scaleX(1.0000)">4</div>
<div class="t" style="left:660.00px;top:116px;font-size:12px;transform:scaleX(1.0000)">6</div>
<div class="t" style="left:688.00px;top:116px;font-size:12px;transform:scaleX(1.0000)">8</div>
<div class="t" style="left:712.00px;top:116px;font-size:12px;transform:scaleX(1.0000)">10</div>
<div class="t" style="left:740.00px;top:116px;font-size:12px;transform:scaleX(1.0000)">12</div>
</div>
</body></html>
